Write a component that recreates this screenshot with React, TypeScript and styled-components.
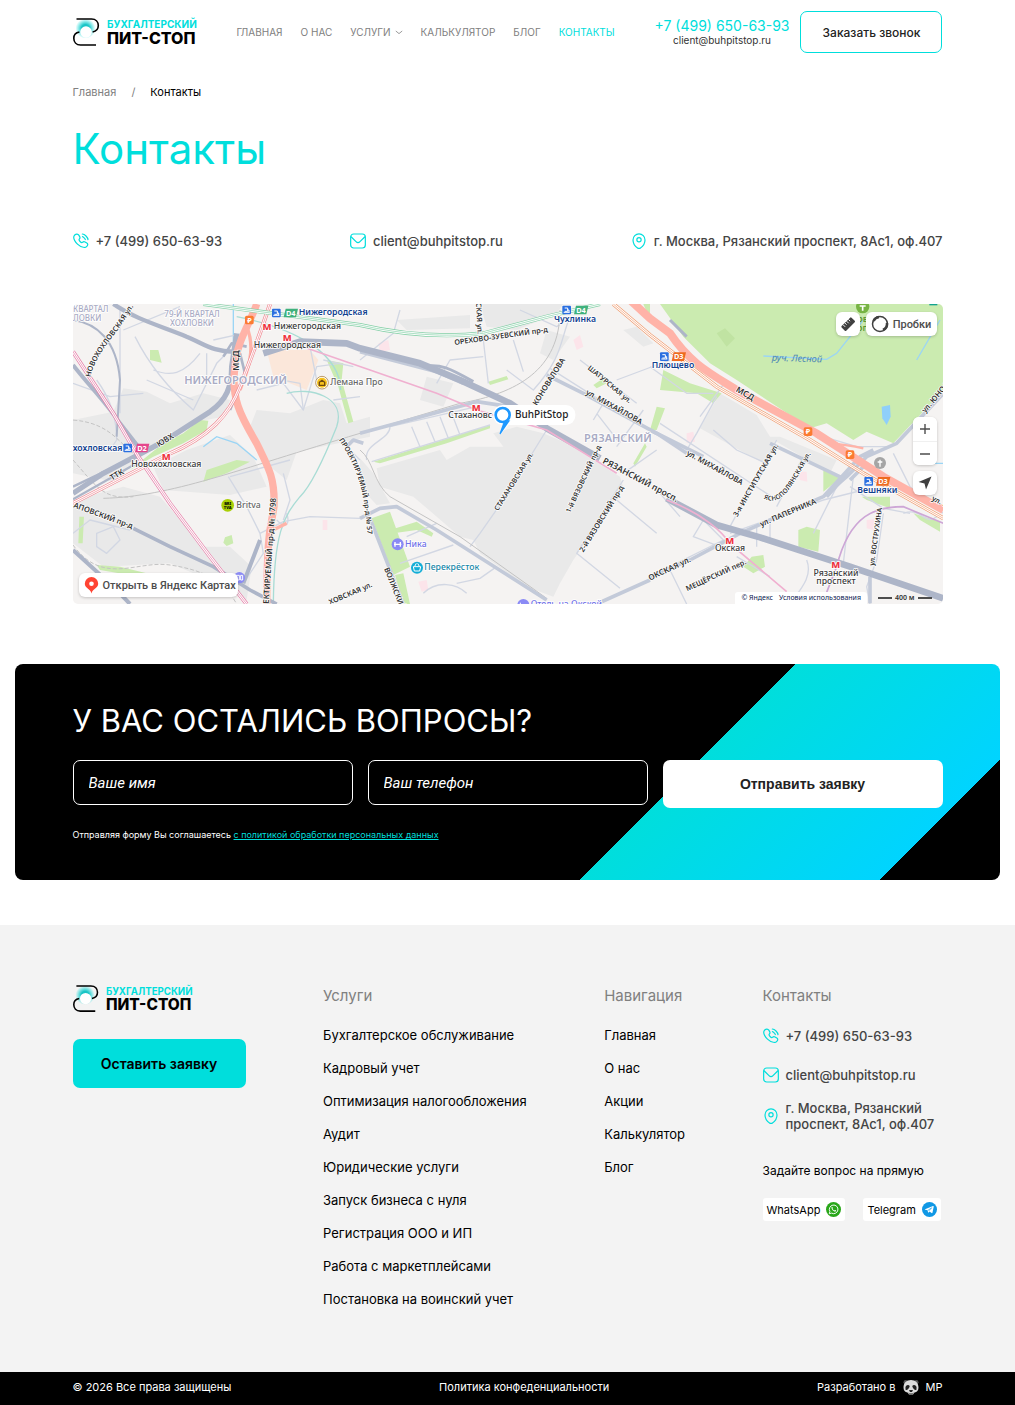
import React from "react";
import styled, { createGlobalStyle, css } from "styled-components";

const accent = "#00dedc";
const sans = `Inter, "Noto Sans", sans-serif`;
const mapSans = `"Noto Sans", "Open Sans", sans-serif`;

const GlobalStyle = createGlobalStyle`
  *, *::before, *::after { box-sizing: border-box; }
  body { margin: 0; background: #fff; color: #000; font-family: ${sans}; }
  a { color: inherit; text-decoration: none; }
  button { font-family: inherit; cursor: pointer; }
  ul { list-style: none; margin: 0; padding: 0; }
  h1, h2, h3, p { margin: 0; font-weight: 400; }
`;

const Container = styled.div`
  width: 100%;
  max-width: 900px;
  margin: 0 auto;
  padding: 0 15px;
`;

/* ---------- header ---------- */

const HeaderRow = styled(Container)`
  display: flex;
  align-items: center;
  justify-content: space-between;
  padding-top: 11px;
  padding-bottom: 11px;
`;

const LogoLink = styled.a`
  display: block;
  svg { display: block; overflow: visible; }
`;

const Nav = styled.nav`
  display: flex;
  gap: 18px;
`;

const NavLink = styled.a<{ $active?: boolean }>`
  display: flex;
  align-items: center;
  gap: 4px;
  font-size: 10px;
  line-height: 14px;
  text-transform: uppercase;
  color: ${(p) => (p.$active ? accent : "#808080")};
`;

const HeaderSide = styled.div`
  display: flex;
  align-items: center;
  gap: 11px;
`;

const HeaderContacts = styled.div`
  display: flex;
  flex-direction: column;
  align-items: center;
  padding-top: 2px;
`;

const HeaderPhone = styled.a`
  font-size: 14px;
  line-height: 14px;
  color: ${accent};
`;

const HeaderMail = styled.a`
  font-size: 10px;
  line-height: 14px;
  color: #333;
`;

const CallButton = styled.button`
  width: 142px;
  height: 42px;
  padding: 0;
  border: 1px solid ${accent};
  border-radius: 7px;
  background: #fff;
  color: #222;
  font-size: 12px;
  font-weight: 500;
`;

/* ---------- page top ---------- */

const Crumbs = styled.nav`
  display: flex;
  gap: 15px;
  padding-top: 20px;
  font-size: 11px;
  line-height: 16px;
  color: #808080;
`;

const CrumbCurrent = styled.span`
  color: #000;
`;

const PageTitle = styled.h1`
  padding-top: 23px;
  font-size: 42px;
  line-height: 52px;
  color: ${accent};
`;

const ContactRow = styled.div`
  display: flex;
  justify-content: space-between;
  padding: 58px 0 55px;
`;

const ContactItem = styled.a`
  display: flex;
  align-items: center;
  gap: 7px;
  font-size: 13px;
  line-height: 16px;
  font-weight: 500;
  color: #444;
  svg { flex: none; display: block; }
`;

/* ---------- map ---------- */

const MapFrame = styled.section`
  position: relative;
  height: 300px;
  border-radius: 5px;
  overflow: hidden;
  font-family: ${mapSans};
`;

const MapDrawing = styled.svg`
  display: block;
  width: 100%;
  height: 100%;
  font-family: ${mapSans};
`;

const controlBox = css`
  border: 0;
  border-radius: 6px;
  background: #fff;
  box-shadow: 0 1px 3px rgba(0, 0, 0, 0.2);
  color: #4d4d4d;
  font-family: Roboto, sans-serif;
  font-size: 11px;
  font-weight: 500;
`;

const MapButton = styled.button`
  ${controlBox}
  display: flex;
  align-items: center;
  justify-content: center;
  gap: 4px;
  height: 24px;
  min-width: 24px;
  padding: 0;
  svg { display: block; }
`;

const TrafficButton = styled(MapButton)`
  width: 71px;
`;

const TopControls = styled.div`
  position: absolute;
  top: 8px;
  right: 6px;
  display: flex;
  gap: 6px;
`;

const SideControls = styled.div`
  position: absolute;
  top: 113px;
  right: 6px;
  display: flex;
  flex-direction: column;
  gap: 6px;
`;

const ZoomGroup = styled.div`
  ${controlBox}
  overflow: hidden;
  ${MapButton} { border-radius: 0; box-shadow: none; }
  ${MapButton} + ${MapButton} { border-top: 1px solid #f0f0f0; }
`;

const OpenMapLink = styled.a`
  ${controlBox}
  position: absolute;
  left: 6px;
  bottom: 7px;
  display: flex;
  align-items: center;
  gap: 4px;
  width: 159px;
  height: 24px;
  padding-left: 5px;
  white-space: nowrap;
`;

const MapLegal = styled.div`
  position: absolute;
  right: 0;
  bottom: 0;
  display: flex;
  gap: 11px;
  padding-right: 11px;
  font-size: 7px;
  line-height: 12px;
`;

const LegalLinks = styled.div`
  display: flex;
  gap: 6px;
  padding: 0 6px;
  border-radius: 3px 3px 0 0;
  background: #fff;
  color: #0a2050;
`;

const ScaleBar = styled.div`
  display: flex;
  align-items: center;
  gap: 3px;
  font-weight: 600;
  color: #333;
  &::before, &::after {
    content: "";
    width: 14px;
    height: 2px;
    background: #4d4d4d;
  }
`;

/* ---------- question form ---------- */

const FormCard = styled.section`
  margin: 60px 15px 45px;
  padding: 37px 0 35px;
  border-radius: 8px;
  background: linear-gradient(135deg, #000 65%, #00dedc 65%, #00d4ff 90%, #000 90%);
  color: #fff;
`;

const FormTitle = styled.h2`
  font-size: 31px;
  line-height: 40px;
  text-transform: uppercase;
`;

const FormGrid = styled.form`
  display: grid;
  grid-template-columns: repeat(3, 1fr);
  align-items: start;
  gap: 15px;
  margin: 19px 0 17px;
`;

const Field = styled.label`
  display: block;
  position: relative;
`;

const HiddenText = styled.span`
  position: absolute;
  width: 1px;
  height: 1px;
  overflow: hidden;
  clip-path: inset(50%);
`;

const TextInput = styled.input`
  display: block;
  width: 100%;
  height: 45px;
  padding: 0 15px;
  border: 1px solid #fff;
  border-radius: 7px;
  background: #000;
  color: #fff;
  font: italic 400 15px Roboto, ${sans};
  &::placeholder { color: #fff; opacity: 1; }
`;

const SubmitButton = styled.button`
  height: 48px;
  border: 0;
  border-radius: 7px;
  background: #fff;
  color: #222;
  font-family: "Liberation Sans", Arial, sans-serif;
  font-size: 14px;
  font-weight: 700;
`;

const Consent = styled.p`
  font-size: 9px;
  line-height: 20px;
  a { color: ${accent}; text-decoration: underline; }
`;

/* ---------- footer ---------- */

const FooterArea = styled.footer`
  background: #f3f3f3;
`;

const FooterGrid = styled(Container)`
  display: flex;
  justify-content: space-between;
  padding-top: 60px;
  padding-bottom: 65px;
`;

const RequestButton = styled.button`
  width: 173px;
  height: 49px;
  margin-top: 27px;
  border: 0;
  border-radius: 7px;
  background: ${accent};
  color: #000;
  font-size: 14px;
  font-weight: 600;
`;

const FooterTitle = styled.h3`
  margin-bottom: 20px;
  font-size: 15px;
  line-height: 22px;
  color: #808080;
`;

const FooterList = styled.ul`
  display: flex;
  flex-direction: column;
  gap: 17px;
  font-size: 13px;
  line-height: 16px;
`;

const FooterContacts = styled.div`
  width: 180px;
`;

const ContactStack = styled.div`
  display: flex;
  flex-direction: column;
  gap: 23px;
  padding-top: 1px;
`;

const AddressItem = styled(ContactItem)`
  margin-top: -6px;
`;

const Ask = styled.p`
  margin: 31px 0 19px;
  font-size: 12px;
  line-height: 16px;
`;

const Messengers = styled.div`
  display: flex;
  gap: 18px;
`;

const Messenger = styled.a`
  display: flex;
  align-items: center;
  gap: 6px;
  height: 23px;
  padding: 0 4px;
  border-radius: 3px;
  background: #fff;
  font-size: 11px;
  svg { display: block; }
`;

const BottomBar = styled.div`
  background: #000;
  color: #fff;
  font-size: 11px;
  line-height: 16px;
`;

const BottomRow = styled(Container)`
  display: flex;
  justify-content: space-between;
  padding-top: 7px;
  padding-bottom: 10px;
`;

const Credit = styled.a`
  display: flex;
  align-items: center;
  gap: 7px;
  svg { display: block; }
`;

/* ---------- icons ---------- */

const Logo = ({ id, width }: { id: string; width: number }) => (
  <svg width={width} viewBox="0 0 124 28" role="img" aria-label="Бухгалтерский Пит-Стоп">
    <defs>
      <radialGradient id={id}>
        <stop offset="0.4" stopColor="#00bfc0" stopOpacity="0.9" />
        <stop offset="1" stopColor="#00dedc" stopOpacity="0" />
      </radialGradient>
    </defs>
    <circle cx="12.500" cy="10.500" r="10" fill={`url(#${id})`} />
    <circle cx="13" cy="14" r="5.800" fill="#fff" />
    <g fill="none" stroke="#000" strokeWidth="1.600">
      <path d="M3.500 1H18.500C23 1 25.300 4 25.300 7.600 25.300 10.800 23 13.400 19.600 14" />
      <path d="M6.400 14C3 14.600 .8 17 .8 20.200 .8 24 3.200 27 7.500 27H23" />
    </g>
    <text x="34" y="10" fontFamily="Inter" fontSize="10" fontWeight="700" fill={accent}>БУХГАЛТЕРСКИЙ</text>
    <text x="34" y="26" fontFamily="Inter" fontSize="16" fontWeight="800" fill="#000">ПИТ-СТОП</text>
  </svg>
);

const iconProps = {
  width: 16,
  height: 16,
  viewBox: "0 0 24 24",
  fill: "none",
  stroke: accent,
  strokeWidth: 1.8,
  strokeLinecap: "round" as const,
  "aria-hidden": true,
};

const PhoneIcon = () => (
  <svg {...iconProps}>
    <path d="M14 1.500s2.700.2 5.500 3 3 5.500 3 5.500M14.200 5.500s1 .3 2.500 1.800 1.800 2.500 1.800 2.500" />
    <path d="M8.700 3.200l1.300 2.300c.7 1.200.4 2.700-.6 3.700 0 0-1 1.300 1.200 3.600s3.700 1.200 3.700 1.200c1-1 2.500-1.300 3.700-.6l2.700 1.500c1.700 1 1.900 3.200.4 4.700-.9.900-2.100 2-3.600 2.100-2.200.1-6.500-.6-10.800-4.900S1 8.300 1.100 6.100c0-1.400 1-2.600 1.900-3.500 1.600-1.500 4.600-1.300 5.700.6z" />
  </svg>
);

const MailIcon = () => (
  <svg {...iconProps}>
    <rect x="1" y="1.500" width="22" height="21" rx="4.500" />
    <path d="M2 6l7 7c2 2 4 2 6 0l7-7" />
  </svg>
);

const PinIcon = () => (
  <svg {...iconProps}>
    <path d="M3 10.500C3 5.200 7 1.200 12 1.200S21 5.200 21 10.500c0 4.500-2.900 9.300-6.800 11.900a4 4 0 0 1-4.400 0C5.900 19.800 3 15 3 10.500z" />
    <circle cx="12" cy="10" r="3.200" />
  </svg>
);

const Chevron = () => (
  <svg width="8" height="5" viewBox="0 0 8 5" fill="none" stroke="#808080" strokeWidth="0.8" aria-hidden>
    <path d="M.8 1L4 3.600 7.200 1" />
  </svg>
);

const WhatsAppIcon = () => (
  <svg width="15" height="15" viewBox="0 0 30 30" aria-hidden>
    <circle cx="15" cy="15" r="15" fill="#29a71a" />
    <path d="M6.500 23.500l1.300-4.600a8.600 8.600 0 1 1 3.300 3.300z" fill="none" stroke="#fff" strokeWidth="1.900" />
    <path d="M11.300 10.200c.7-.6 1.500-.4 1.700.2l.7 1.700c.2.500-.7 1.300-.7 1.600.7 1.400 2 2.600 3.500 3.200.5 0 1-1.300 1.500-1.100l1.800.9c.5.300.4 1.300-.1 1.900-2.700 2.700-10.200-3.600-8.400-8.400z" fill="#fff" />
  </svg>
);

const TelegramIcon = () => (
  <svg width="15" height="15" viewBox="0 0 30 30" aria-hidden>
    <circle cx="15" cy="15" r="15" fill="#1098e5" />
    <path d="M6 14.500L22 8c1-.3 1.600.2 1.400 1.300l-2.500 12c-.2 1-1 1.200-1.800.7l-4-3-2 2c-.5.500-1 .3-1.100-.3l-.7-4.100-4.900-1.200c-.9-.3-.9-.6-.4-.9z" fill="#fff" />
    <path d="M12 16.500l7.500-5-5.500 6" fill="none" stroke="#1098e5" strokeWidth="1.200" />
  </svg>
);

const PandaIcon = () => (
  <svg width="16" height="16" viewBox="0 0 32 32" aria-hidden>
    <circle cx="5.500" cy="6.500" r="4.500" fill="#555" />
    <circle cx="26.500" cy="6.500" r="4.500" fill="#555" />
    <path d="M16 2C25 2 31 8 31 17c0 6-3 9-8 10l-3 4h-8l-3-4c-5-1-8-4-8-10C1 8 7 2 16 2z" fill="#ddd" />
    <path d="M5 19c-1-4 2-7 5-7s4 2 3 4-4 6-6 6-2-1-2-3zM27 19c1-4-2-7-5-7s-4 2-3 4 4 6 6 6 2-1 2-3z" fill="#222" />
    <path d="M12 22h8l-2 4h-4z" fill="#222" />
    <path d="M11 28c3 2 7 2 10 0" fill="none" stroke="#444" strokeWidth="1.500" />
  </svg>
);

/* ---------- map drawing: three units to a pixel ---------- */

type LabelProps = {
  x: number;
  y: number;
  size?: number;
  fill?: string;
  weight?: number;
  anchor?: "start" | "middle" | "end";
  children: React.ReactNode;
};

const Label = ({ x, y, size = 26, fill = "#3b3b3b", weight = 500, anchor = "middle", children }: LabelProps) => (
  <text x={x} y={y} fontSize={size} fontWeight={weight} fill={fill} textAnchor={anchor} stroke="#fff" strokeWidth="5" strokeLinejoin="round" paintOrder="stroke">
    {children}
  </text>
);

/* Names along bending streets follow a curve, the others are turned as a whole. */
const curvedStreets = [
  { d: "M62 232C75 160 130 120 190 20", name: "НОВОХОХЛОВСКАЯ ул.", size: 22 },
  { d: "M806 420C870 510 890 600 895 760", name: "ПРОЕКТИРУЕМЫЙ пр-д № 57", size: 21 },
  { d: "M2080 596C2150 625 2170 540 2260 400", name: "ЯСНОПОЛЯНСКАЯ ул.", size: 20 },
];

const streets = [
  { x: 9, y: 622, turn: 20, name: "АПОВСКИЙ пр-д", size: 23 },
  { x: 506, y: 212, turn: -90, name: "МСД", size: 26 },
  { x: 266, y: 442, turn: -32, name: "ЮВХ", size: 24 },
  { x: 126, y: 542, turn: -31, name: "ТТК", size: 24 },
  { x: 596, y: 912, turn: -86, name: "ЕКТИРУЕМЫЙ пр-д № 1798", size: 24 },
  { x: 780, y: 914, turn: -23, name: "ХОВСКАЯ ул.", size: 22 },
  { x: 1218, y: 8, turn: 87, name: "СКАЯ ул.", size: 22 },
  { x: 1154, y: 135, turn: -8, name: "ОРЕХОВО-ЗУЕВСКИЙ пр-д", size: 22 },
  { x: 1400, y: 318, turn: -58, name: "КОНОВАЛОВА", size: 23 },
  { x: 1552, y: 206, turn: 40, name: "ШАТУРСКАЯ ул.", size: 21 },
  { x: 1546, y: 282, turn: 29, name: "ул. МИХАЙЛОВА", size: 23 },
  { x: 1284, y: 634, turn: -58, name: "СТАХАНОВСКАЯ ул.", size: 21 },
  { x: 1500, y: 640, turn: -65, name: "1-й ВЯЗОВСКИЙ пр-д", size: 21 },
  { x: 1540, y: 758, turn: -58, name: "2-й ВЯЗОВСКИЙ пр-д", size: 22 },
  { x: 1596, y: 488, turn: 28, name: "РЯЗАНСКИЙ просп.", size: 26 },
  { x: 942, y: 806, turn: 68, name: "ВОЛЖСКИЙ", size: 23 },
  { x: 1996, y: 274, turn: 29, name: "МСД", size: 25 },
  { x: 1848, y: 464, turn: 29, name: "ул. МИХАЙЛОВА", size: 23 },
  { x: 2002, y: 652, turn: -60, name: "3-я ИНСТИТУТСКАЯ ул.", size: 22 },
  { x: 2074, y: 680, turn: -23, name: "ул. ПАПЕРНИКА", size: 23 },
  { x: 1740, y: 842, turn: -25, name: "ОКСКАЯ ул.", size: 24 },
  { x: 1852, y: 874, turn: -25, name: "МЕЩЁРСКИЙ пер.", size: 22 },
  { x: 2412, y: 798, turn: -82, name: "ул. ВОСТРУХИНА", size: 21 },
  { x: 2566, y: 340, turn: -50, name: "ул. ЮНОСТИ", size: 23 },
  { x: 2584, y: 600, turn: 27, name: "ул. П", size: 22 },
];

const minorRoads = [
  "M9 250L120 290 220 280M150 30V340M160 90L330 20M80 240C110 280 140 340 140 420L120 450",
  "M195 110C240 200 300 270 370 330L440 190 470 160M250 210C300 230 340 225 390 160",
  "M230 240L370 300M410 160V250M430 120L520 100M560 270L640 250 700 330 740 200 810 190",
  "M700 330L690 250 580 230M720 140L740 240M790 300L870 290M760 180L850 200",
  "M475 530L530 620 570 700 640 665 720 650 870 655M480 530L660 480M570 700L580 760 520 850",
  "M640 520L660 600 640 660M620 660C650 690 660 670 650 640M830 440L870 480",
  "M9 700L60 660 180 690M80 700L130 680 150 720 110 760 80 740Z",
  "M870 180L970 100 990 30M1100 250L1140 180 1240 170M1240 120L1255 250M1330 120L1360 215",
  "M890 480C880 430 960 420 960 380M905 485L1260 375M1025 380L1050 440M1070 365L1095 425M1110 350L1135 415M1145 340L1170 405",
  "M960 380L1220 320M1350 30L1460 80 1500 50M1500 50C1470 120 1480 170 1390 270L1310 210",
  "M1440 205L1700 370M1640 240L1800 180M1720 330L1640 440M1580 340L1650 430M1600 310L1570 360M1530 180L1700 310",
  "M1430 390L1300 600 1230 700 1200 740M1660 520L1760 450M1660 540L1520 760 1650 865M1640 600L1760 700",
  "M990 790L1150 735M1060 880C1100 840 1160 850 1190 880M1160 850L1230 835 1280 800M1010 710L1100 670",
  "M1740 200L1850 280 1930 280M1940 290L1880 400 1850 450M1890 350L1970 240M1770 370L2120 600",
  "M2120 420L1980 680M1930 390L2000 450 2090 490M2200 470L2120 620M2230 700L2300 560M2090 490L2060 550",
  "M1880 640L1960 720 1800 800 1740 840M1880 640L1900 660 1870 710 1950 740M1800 810L1850 912M2000 770L2100 830",
  "M1980 700L2260 600 2380 570M2210 780C2230 830 2190 870 2160 912M2060 680V740M2100 670V720",
  "M2440 640L2420 780 2390 860 2400 912M2470 460L2520 560 2620 640M2340 560L2440 625 2520 640",
  "M2350 530L2320 790M2260 410L2360 440 2450 440M2500 640C2560 620 2560 680 2600 650M1770 580L1830 650",
];

const stations = [
  { x: 591, y: 89 },
  { x: 652, y: 123 },
  { x: 289, y: 480 },
  { x: 1219, y: 333 },
  { x: 1979, y: 731 },
  { x: 2297, y: 803 },
];

const trainStops = [
  { x: 619, y: 39, line: "D4", fill: "#3fb17c" },
  { x: 173, y: 444, line: "D2", fill: "#e5468c" },
  { x: 1490, y: 30, line: "D4", fill: "#3fb17c" },
  { x: 1783, y: 170, line: "D3", fill: "#ee6a1f" },
  { x: 2396, y: 544, line: "D3", fill: "#ee6a1f" },
];

const tollSigns = [
  { x: 538, y: 60 },
  { x: 2214, y: 395 },
  { x: 2340, y: 464 },
];

const CityMap = () => (
  <MapDrawing viewBox="9 12 2610 900" preserveAspectRatio="xMidYMid slice" role="img" aria-label="Карта района">
    <rect x="-2000" y="-500" width="7000" height="2000" fill="#f5f3f2" />
    <g fill="#e9e9e9">
      <path d="M9 360L130 335 160 265 230 275 300 310 400 280 480 300 460 350 380 365 250 440 130 545 9 520Z" />
      <path d="M350 450L480 405 550 470 590 560 480 585 280 570 250 500Z" />
      <path d="M560 330L660 340 760 300 810 310 830 370 900 350V410L680 455 650 540 600 500 540 380Z" />
      <path d="M9 600L160 560 270 590 400 740 480 740 545 800 530 900 440 850 300 790 100 800 9 730Z" />
      <path d="M920 505L1110 450 1130 480 1200 440 1300 440 1270 400 1340 380 1420 400 1490 430 1650 530 1660 560 1510 780 1470 850 1450 890 1370 860 1230 760 1210 720 1170 710 1030 590 930 560Z" />
      <path d="M980 60L1200 45V85L1010 90ZM1230 12H1480L1460 40 1340 90 1250 80ZM870 475L910 520 960 610 920 615 870 560ZM1070 230L1150 250 1120 320 1050 300ZM1430 90L1500 110 1450 180 1410 160Z" />
      <path d="M1950 280L2060 345 2100 410 2130 410 2300 480 2280 520 2120 425 2080 490 1890 385ZM1660 90L1700 80 1750 130 1720 140Z" />
    </g>
    <path d="M590 150L720 150 745 180 710 270 610 230Z" fill="#fbe7da" />
    <g fill="#cbebb0">
      <path d="M1770 12H2640V250L2470 430 2390 395 2350 420 2270 370 2220 385 2000 240 1920 190 1840 110Z" />
      <path d="M240 150L265 150 275 188 240 180ZM180 510L280 430 340 400 390 360 415 362 410 390 340 430 250 470ZM410 510L500 480 540 485 470 520 400 545ZM770 180L820 190 815 240 850 365 835 370 805 260Z" />
      <path d="M28 650L42 650 38 730 25 730ZM80 795L150 800 230 820 210 830 90 810ZM465 712L485 705 490 730 470 738 460 728Z" />
      <path d="M910 485L1260 375V385L1130 430 930 490ZM1255 245L1310 228 1315 238 1260 255ZM905 655L960 635 980 690 1020 800 970 825ZM960 690L1040 665 1090 700 1085 710 1040 690 970 700ZM975 825L1000 820 1020 912H1000Z" />
      <path d="M1570 255L1600 235 1610 250 1580 265ZM1740 390L1760 320 1785 325 1760 390ZM1740 12V60L1720 12ZM1690 490L1725 430 1730 440 1695 500Z" />
      <path d="M1780 210L1860 250 1955 280 1930 310 1880 280 1770 270ZM2260 510L2310 535 2260 575ZM2375 590L2460 590V625L2390 600ZM2185 690L2210 680 2250 690 2245 755 2185 740ZM2045 770L2080 765 2085 800 2050 820 2020 800ZM2530 640L2610 665V695L2550 660Z" />
    </g>
    <path d="M1940 100L1965 85 1995 115 1970 140Z" fill="#c0e3a2" />
    <path d="M2435 320L2460 315 2462 350 2450 375 2437 355Z" fill="#8fcffa" />
    <path d="M2610 60L2540 180M2380 60L2300 160 2270 178 2080 168M400 440L440 410 500 430 560 480M490 12V140M2560 490H2640" fill="none" stroke="#9bd5f5" strokeWidth="4" />
    <g fill="#fce4ea">
      <path d="M925 130L955 120 960 150 930 155ZM1510 120L1530 105 1540 140 1520 150ZM1850 400L1870 395 1875 425 1850 430ZM2185 515L2210 515 2212 545 2190 540ZM2390 660L2412 658V690L2390 685ZM1045 845L1070 840 1075 870 1055 875ZM758 660H772V690H758Z" />
    </g>

    <g fill="none" stroke="#d2d7e3" strokeWidth="4" strokeLinejoin="round">
      {minorRoads.map((d) => <path key={d} d={d} />)}
    </g>

    <g fill="none" stroke="#c3c3c3" strokeWidth="3">
      <path d="M100 595C300 590 500 510 870 400L1170 310C1340 280 1470 210 1470 30M870 450C910 480 910 550 960 590L1170 710 1430 895" />
      <path d="M9 360C130 370 150 440 205 470M9 480C80 560 100 600 190 590M9 735C100 860 200 780 300 795S460 840 500 912" strokeDasharray="12 6" />
    </g>
    <path d="M650 280C720 260 830 290 800 380 760 480 720 560 690 590 640 650 612 700 610 912M500 50C700 90 810 170 812 270" fill="none" stroke="#a9dcd5" strokeWidth="4" />

    <g fill="none" stroke="#c3cad9" strokeWidth="11" strokeLinejoin="round">
      <path d="M870 155L1100 215 1180 250M870 400L1220 305 1320 320M1430 225L1540 280 1760 400 1850 460" />
      <path d="M870 655L930 625 980 620 1100 690 1430 900M900 655L1000 912M830 440L850 420 880 430" />
      <path d="M2620 280L2480 430 2390 470 2330 530 2260 590 2190 620 2010 700 1860 780 1740 830M2260 590L2370 470 2410 450M1740 390L1900 470" />
      <path d="M1580 912L1740 840M2100 430L2320 535 2270 590M2340 540L2390 490M2400 910V830" />
    </g>

    <g fill="none" stroke="#adb5c8" strokeLinejoin="round">
      <path d="M9 580L100 520 280 425 420 335C470 300 485 260 485 200L500 100" strokeWidth="16" />
      <path d="M9 560L250 445M9 598L200 490" strokeWidth="7" />
      <path d="M9 195C60 260 110 310 150 370L205 440" strokeWidth="12" />
      <path d="M130 12C200 60 280 80 350 110 400 130 430 158 500 155" strokeWidth="13" />
      <path d="M190 685L300 740 430 800 540 870 620 912" strokeWidth="11" />
      <path d="M9 750L130 860 180 912M520 850L570 720" strokeWidth="12" />
      <path d="M9 60C80 70 140 120 150 240L140 410" strokeWidth="6" />
      <path d="M460 170L485 130 530 140M510 160L525 220 480 330" strokeWidth="8" />
      <path d="M580 160L690 125 830 130 870 145 1050 190 1170 240 1320 310 1430 385 1590 475" strokeWidth="20" />
      <path d="M1790 595L1940 675 2070 712 2340 800 2620 895" strokeWidth="20" />
      <path d="M1060 200C1110 190 1140 205 1210 245M1800 60L1850 110" strokeWidth="9" />
    </g>

    <path d="M560 12C545 60 497 130 495 200 480 300 520 360 560 430 600 510 615 540 612 620L600 690C590 760 592 830 590 912" fill="none" stroke="#ffb3a8" strokeWidth="22" />
    <path d="M530 80C560 150 530 220 510 270M590 700L650 670" fill="none" stroke="#ffb3a8" strokeWidth="10" />
    <path d="M1680 0L1740 55 1800 100C1860 190 1920 220 2000 270L2240 400 2440 530 2620 630" fill="none" stroke="#ffb3a8" strokeWidth="24" />
    <path d="M2240 410C2300 440 2320 430 2380 445" fill="none" stroke="#ffb3a8" strokeWidth="7" />

    {[
      { d: "M9 155L130 340 205 470 300 610 420 770 530 912", color: "#e57ba6" },
      { d: "M9 610L290 465C420 410 480 340 510 260 550 160 570 100 600 12", color: "#ef8690" },
      { d: "M400 12L870 75C1000 105 1130 112 1240 100L1430 50 1590 12", color: "#83cfa6" },
      { d: "M1630 12L1740 105 1940 260 2220 420 2380 520 2620 655", color: "#f0986a" },
    ].map((line) => (
      <g key={line.color} fill="none">
        <path d={line.d} stroke={line.color} strokeWidth="12" />
        <path d={line.d} stroke="#fff" strokeWidth="8" />
        <path d={line.d} stroke={line.color} strokeWidth="2" />
      </g>
    ))}
    <path d="M640 120L900 210 1100 280 1220 330 1430 390 1640 520M1790 600C1900 640 1960 700 1979 730L2150 875" fill="none" stroke="#f0b0d0" strokeWidth="5" />
    <path d="M2265 890L2300 800C2340 640 2420 620 2500 620L2620 670" fill="none" stroke="#cda6d6" strokeWidth="5" />

    <g>
      <Label x={9} y={36} size={24} anchor="start" fill="#a9abc4">КВАРТАЛ</Label>
      <Label x={9} y={63} size={24} anchor="start" fill="#a9abc4">ЛОВКИ</Label>
      <Label x={366} y={50} size={24} anchor="middle" fill="#a9abc4">79-Й КВАРТАЛ</Label>
      <Label x={366} y={77} size={24} anchor="middle" fill="#a9abc4">ХОХЛОВКИ</Label>
      <Label x={497} y={251} size={33} weight={600} fill="#a9abc4">НИЖЕГОРОДСКИЙ</Label>
      <Label x={1644} y={427} size={33} weight={600} fill="#a9abc4">РЯЗАНСКИЙ</Label>
    </g>

    <g fontWeight="600" fill="#333" stroke="#fff" strokeWidth="4" paintOrder="stroke">
      {streets.map((s) => (
        <text key={`${s.x}-${s.y}`} fontSize={s.size} transform={`translate(${s.x} ${s.y}) rotate(${s.turn})`}>{s.name}</text>
      ))}
      {curvedStreets.map((s, i) => (
        <React.Fragment key={s.name}>
          <path id={`street-${i}`} d={s.d} fill="none" stroke="none" />
          <text fontSize={s.size}>
            <textPath href={`#street-${i}`}>{s.name}</textPath>
          </text>
        </React.Fragment>
      ))}
    </g>

    {stations.map((s) => <Label key={s.x} x={s.x} y={s.y} size={28} weight={800} fill="#ee3340">М</Label>)}
    <Label x={611} y={87} anchor="start">Нижегородская</Label>
    <Label x={652} y={145}>Нижегородская</Label>
    <Label x={289} y={502}>Новохохловская</Label>
    <Label x={1135} y={354} anchor="start">Стахановс</Label>
    <Label x={1980} y={754}>Окская</Label>
    <Label x={2298} y={827}>Рязанский</Label>
    <Label x={2298} y={853}>проспект</Label>

    {trainStops.map((s) => (
      <g key={s.x}>
        <rect x={s.x - 13} y={s.y - 13} width="26" height="26" rx="3" fill="#2a6fe0" />
        <path d={`M${s.x - 9} ${s.y + 7}H${s.x + 9}M${s.x - 6} ${s.y - 6}H${s.x + 3}V${s.y + 4}H${s.x - 6}M${s.x + 3} ${s.y}H${s.x + 7}V${s.y + 7}`} fill="none" stroke="#fff" strokeWidth="3" />
        <path d={`M${s.x + 28} ${s.y - 13}H${s.x + 65}L${s.x + 59} ${s.y + 13}H${s.x + 22}Z`} fill={s.fill} />
        <text x={s.x + 43} y={s.y + 8} fontSize="22" fontWeight="700" fill="#fff" textAnchor="middle">{s.line}</text>
      </g>
    ))}
    <Label x={686} y={46} anchor="start" weight={600} fill="#12418f">Нижегородская</Label>
    <Label x={157} y={453} anchor="end" weight={600} fill="#12418f">охохловская</Label>
    <Label x={1515} y={65} weight={600} fill="#12418f">Чухлинка</Label>
    <Label x={1809} y={205} weight={600} fill="#12418f">Плющево</Label>
    <Label x={2422} y={579} weight={600} fill="#12418f">Вешняки</Label>

    {tollSigns.map((s) => (
      <g key={s.x}>
        <rect x={s.x - 13} y={s.y - 13} width="26" height="26" rx="5" fill="#fb7b31" />
        <text x={s.x} y={s.y + 8} fontSize="22" fontWeight="700" fill="#fff" textAnchor="middle">₽</text>
      </g>
    ))}

    <g>
      <circle cx="756" cy="248" r="19" fill="#fff" stroke="#9b6a20" strokeWidth="2" />
      <circle cx="756" cy="248" r="15" fill="#f7c21c" />
      <path d="M748 256V247L756 241 764 247V256Z" fill="none" stroke="#6f4a10" strokeWidth="4" />
      <Label x={781} y={256} anchor="start" fill="#666">Лемана Про</Label>
      <circle cx="473" cy="616" r="19" fill="#aacf05" />
      <text x="473" y="615" fontSize="12" fontWeight="800" textAnchor="middle">BRI</text>
      <text x="473" y="627" fontSize="12" fontWeight="800" textAnchor="middle">TVA</text>
      <Label x={499} y={623} anchor="start" fill="#666">Britva</Label>
      <circle cx="983" cy="733" r="18" fill="#8a8af5" />
      <path d="M972 733H994M975 726V740M991 726V740" stroke="#fff" strokeWidth="4" />
      <Label x={1005} y={741} anchor="start" fill="#6f70e8">Ника</Label>
      <circle cx="1041" cy="803" r="18" fill="#12add6" />
      <path d="M1030 800H1052L1049 813H1033ZM1034 799L1039 790M1048 799L1043 790" fill="none" stroke="#fff" strokeWidth="3" />
      <Label x={1063} y={810} anchor="start" fill="#1687a8">Перекрёсток</Label>
      <circle cx="1360" cy="915" r="18" fill="#8a8af5" />
      <path d="M1351 908V920M1351 914H1369V920" stroke="#fff" strokeWidth="3" fill="none" />
      <Label x={1382} y={921} anchor="start" fill="#6f70e8">Отель на Окской</Label>
      <circle cx="508" cy="833" r="17" fill="#8a8af5" />
      <path d="M499 826H508V840H499ZM512 826H518V840H512Z" stroke="#fff" strokeWidth="3" fill="none" />
      <circle cx="2430" cy="489" r="18" fill="#a5a5a5" />
      <path d="M2430 479V500M2423 486H2437" stroke="#fff" strokeWidth="4" />
      <circle cx="2378" cy="20" r="20" fill="#77b443" />
      <path d="M2378 32V18M2369 18H2387" stroke="#fff" strokeWidth="5" />
      <text x="2378" y="66" fontSize="27" fontWeight="600" fill="#629b31" textAnchor="middle">ов</text>
      <text x="2378" y="92" fontSize="27" fontWeight="600" fill="#629b31" textAnchor="middle">оп</text>
      <text x="2105" y="182" fontSize="28" fontStyle="italic" fill="#4b86b4" transform="rotate(2 2105 182)">руч. Лесной</text>
      <rect x="2578" y="12" width="24" height="4" fill="#13a38f" />
    </g>

    <g>
      <rect x="1270" y="315" width="246" height="60" rx="28" fill="#fff" />
      <path d="M1297 368C1278 366 1273 333 1298 327 1325 322 1330 355 1318 372L1293 402Z" fill="#fff" />
      <path d="M1300 368L1321 360 1292 402C1290 404 1288 402 1289 399Z" fill="#1e98ff" />
      <circle cx="1298" cy="345" r="21" fill="#fff" stroke="#1e98ff" strokeWidth="8" />
      <text x="1335" y="354" fontSize="30" fontWeight="500" fill="#222">BuhPitStop</text>
    </g>
  </MapDrawing>
);

/* ---------- data ---------- */

const services = [
  "Бухгалтерское обслуживание",
  "Кадровый учет",
  "Оптимизация налогообложения",
  "Аудит",
  "Юридические услуги",
  "Запуск бизнеса с нуля",
  "Регистрация ООО и ИП",
  "Работа с маркетплейсами",
  "Постановка на воинский учет",
];

const pages = ["Главная", "О нас", "Акции", "Калькулятор", "Блог"];

export default function App() {
  return (
    <>
      <GlobalStyle />
      <header>
        <HeaderRow>
          <LogoLink href="#"><Logo id="glow-header" width={124} /></LogoLink>
          <Nav>
            <NavLink href="#">Главная</NavLink>
            <NavLink href="#">О нас</NavLink>
            <NavLink href="#">Услуги <Chevron /></NavLink>
            <NavLink href="#">Калькулятор</NavLink>
            <NavLink href="#">Блог</NavLink>
            <NavLink href="#" $active>Контакты</NavLink>
          </Nav>
          <HeaderSide>
            <HeaderContacts>
              <HeaderPhone href="tel:+74996506393">+7 (499) 650-63-93</HeaderPhone>
              <HeaderMail href="mailto:client@buhpitstop.ru">client@buhpitstop.ru</HeaderMail>
            </HeaderContacts>
            <CallButton type="button">Заказать звонок</CallButton>
          </HeaderSide>
        </HeaderRow>
      </header>

      <main>
        <Container>
          <Crumbs>
            <a href="#">Главная</a>
            <span>/</span>
            <CrumbCurrent>Контакты</CrumbCurrent>
          </Crumbs>
          <PageTitle>Контакты</PageTitle>
          <ContactRow>
            <ContactItem href="tel:+74996506393"><PhoneIcon />+7 (499) 650-63-93</ContactItem>
            <ContactItem href="mailto:client@buhpitstop.ru"><MailIcon />client@buhpitstop.ru</ContactItem>
            <ContactItem href="#"><PinIcon />г. Москва, Рязанский проспект, 8Ас1, оф.407</ContactItem>
          </ContactRow>
          <MapFrame>
            <CityMap />
            <TopControls>
              <MapButton type="button" aria-label="Линейка">
                <svg width="16" height="16" viewBox="0 0 16 16">
                  <g transform="rotate(-45 8 8)">
                    <rect x="1" y="5" width="14" height="6.500" rx="1" fill="#404040" />
                    <path d="M4 5V8M6.500 5V7.500M9 5V8M11.500 5V7.500" stroke="#fff" strokeWidth="0.9" />
                  </g>
                </svg>
              </MapButton>
              <TrafficButton type="button">
                <svg width="18" height="18" viewBox="0 0 18 18" fill="none" stroke="#404040">
                  <circle cx="9" cy="9" r="7.500" strokeWidth="1.500" />
                  <path d="M2.500 6A7 7 0 0 1 8 2M16 8A7 7 0 0 1 12 15" strokeWidth="2.500" />
                </svg>
                Пробки
              </TrafficButton>
            </TopControls>
            <SideControls>
              <ZoomGroup>
                <MapButton type="button" aria-label="Приблизить">
                  <svg width="10" height="10" viewBox="0 0 10 10" stroke="#4d4d4d" strokeWidth="1.400"><path d="M5 0V10M0 5H10" /></svg>
                </MapButton>
                <MapButton type="button" aria-label="Отдалить">
                  <svg width="10" height="10" viewBox="0 0 10 10" stroke="#4d4d4d" strokeWidth="1.400"><path d="M0 5H10" /></svg>
                </MapButton>
              </ZoomGroup>
              <MapButton type="button" aria-label="Моё местоположение">
                <svg width="14" height="14" viewBox="0 0 14 14" fill="#404040"><path d="M13.500 .5L8 13.500 6.500 7.500.5 6Z" /></svg>
              </MapButton>
            </SideControls>
            <OpenMapLink href="#">
              <svg width="15" height="18" viewBox="0 0 15 18" aria-hidden>
                <path d="M7.500 1A6.700 6.700 0 0 1 14.200 7.700C14.200 12 8.500 12.500 7.500 17.500 6.500 12.500.8 12 .8 7.700A6.700 6.700 0 0 1 7.500 1z" fill="#f43" />
                <circle cx="7.500" cy="7.700" r="2.300" fill="#fff" />
              </svg>
              Открыть в Яндекс Картах
            </OpenMapLink>
            <MapLegal>
              <LegalLinks>
                <a href="#">© Яндекс</a>
                <a href="#">Условия использования</a>
              </LegalLinks>
              <ScaleBar>400 м</ScaleBar>
            </MapLegal>
          </MapFrame>
        </Container>

        <FormCard>
          <Container>
            <FormTitle>У вас остались вопросы?</FormTitle>
            <FormGrid onSubmit={(e) => e.preventDefault()}>
              <Field>
                <HiddenText>Ваше имя</HiddenText>
                <TextInput type="text" name="name" placeholder="Ваше имя" />
              </Field>
              <Field>
                <HiddenText>Ваш телефон</HiddenText>
                <TextInput type="tel" name="phone" placeholder="Ваш телефон" />
              </Field>
              <SubmitButton type="submit">Отправить заявку</SubmitButton>
            </FormGrid>
            <Consent>
              Отправляя форму Вы соглашаетесь <a href="#">с политикой обработки персональных данных</a>
            </Consent>
          </Container>
        </FormCard>
      </main>

      <FooterArea>
        <FooterGrid>
          <div>
            <LogoLink href="#"><Logo id="glow-footer" width={120} /></LogoLink>
            <RequestButton type="button">Оставить заявку</RequestButton>
          </div>
          <div>
            <FooterTitle>Услуги</FooterTitle>
            <FooterList>
              {services.map((s) => <li key={s}><a href="#">{s}</a></li>)}
            </FooterList>
          </div>
          <div>
            <FooterTitle>Навигация</FooterTitle>
            <FooterList>
              {pages.map((p) => <li key={p}><a href="#">{p}</a></li>)}
            </FooterList>
          </div>
          <FooterContacts>
            <FooterTitle>Контакты</FooterTitle>
            <ContactStack>
              <ContactItem href="tel:+74996506393"><PhoneIcon />+7 (499) 650-63-93</ContactItem>
              <ContactItem href="mailto:client@buhpitstop.ru"><MailIcon />client@buhpitstop.ru</ContactItem>
              <AddressItem href="#"><PinIcon />г. Москва, Рязанский проспект, 8Ас1, оф.407</AddressItem>
            </ContactStack>
            <Ask>Задайте вопрос на прямую</Ask>
            <Messengers>
              <Messenger href="#">WhatsApp <WhatsAppIcon /></Messenger>
              <Messenger href="#">Telegram <TelegramIcon /></Messenger>
            </Messengers>
          </FooterContacts>
        </FooterGrid>
        <BottomBar>
          <BottomRow>
            <span>© 2026 Все права защищены</span>
            <a href="#">Политика конфеденциальности</a>
            <Credit href="#">Разработано в <PandaIcon /> МР</Credit>
          </BottomRow>
        </BottomBar>
      </FooterArea>
    </>
  );
}
